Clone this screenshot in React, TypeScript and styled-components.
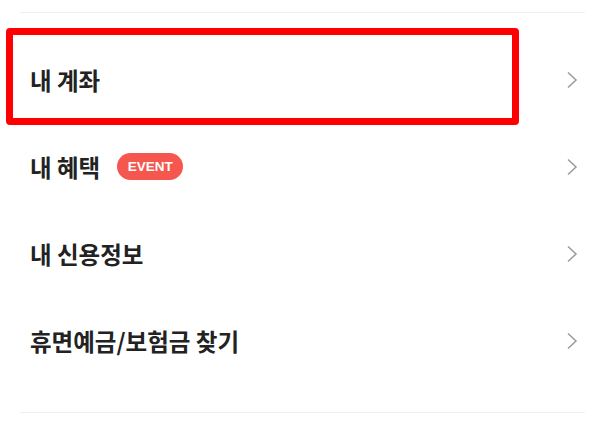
import React from "react";
import styled, { createGlobalStyle } from "styled-components";

const GlobalStyle = createGlobalStyle`
  body {
    margin: 0;
    background: #ffffff;
    font-family: "Noto Sans CJK KR", "Noto Sans", sans-serif;
  }
`;

const Page = styled.div`
  width: 600px;
  height: 427px;
  padding: 12px 15px 0 20px;
  box-sizing: border-box;
`;

const Divider = styled.hr`
  margin: 0;
  border: 0;
  height: 1px;
  background: #efefef;
`;

const MenuList = styled.ul`
  list-style: none;
  margin: 0;
  padding: 23px 0 28px;
`;

const MenuRow = styled.li`
  position: relative;
  height: 87px;
  display: flex;
  align-items: center;
  justify-content: space-between;
  padding: 0 7px 0 10px;
`;

const Label = styled.div`
  display: flex;
  align-items: center;
  gap: 17px;
  font-size: 23.5px;
  font-weight: 700;
  color: #222222;
`;

const Badge = styled.span`
  display: inline-flex;
  align-items: center;
  justify-content: center;
  width: 66px;
  height: 27px;
  border-radius: 14px;
  background: #f5564e;
  color: #ffffff;
  font-family: "Liberation Sans", Arial, sans-serif;
  font-size: 13.5px;
  font-weight: 700;
`;

const Highlight = styled.div`
  position: absolute;
  top: -8px;
  left: -14px;
  width: 513px;
  height: 97px;
  box-sizing: border-box;
  border: 7px solid #ff0000;
  border-radius: 4px;
  filter: blur(0.4px);
  pointer-events: none;
`;

const Chevron = () => (
  <svg width="12" height="18" viewBox="0 0 12 18" fill="none">
    <path d="M2 1.5 L10 9 L2 16.5" stroke="#9a9a9a" strokeWidth="1.5" />
  </svg>
);

interface IMenuItem {
  title: string;
  badge?: string;
  highlighted?: boolean;
}

const items: IMenuItem[] = [
  { title: "내 계좌", highlighted: true },
  { title: "내 혜택", badge: "EVENT" },
  { title: "내 신용정보" },
  { title: "휴면예금/보험금 찾기" },
];

const App: React.FunctionComponent = () => {
  return (
    <>
      <GlobalStyle />
      <Page>
        <Divider />
        <MenuList>
          {items.map((item) => (
            <MenuRow key={item.title}>
              <Label>
                {item.title}
                {item.badge && <Badge>{item.badge}</Badge>}
              </Label>
              <Chevron />
              {item.highlighted && <Highlight />}
            </MenuRow>
          ))}
        </MenuList>
        <Divider />
      </Page>
    </>
  );
};

export default App;
